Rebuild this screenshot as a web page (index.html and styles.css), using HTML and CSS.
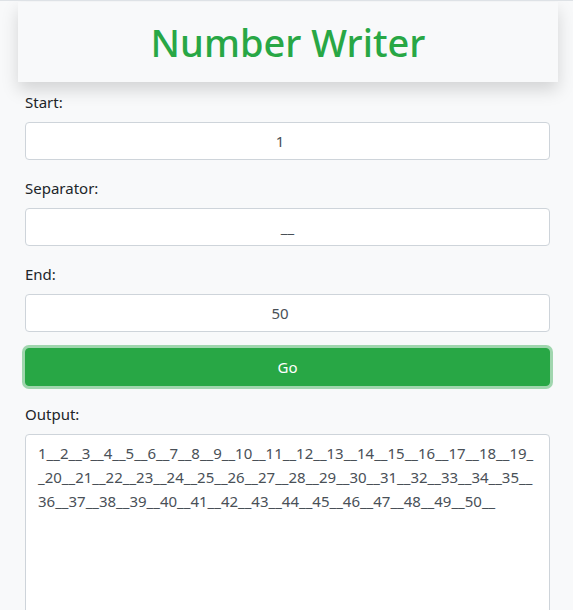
FILE: index.html
```html
<!DOCTYPE html>
<html lang="en">
<head>
<meta charset="utf-8">
<title>Number Writer</title>
<link rel="stylesheet" href="styles.css">
</head>
<body>
<div class="page">
  <header class="header">
    <h1 class="title">Number Writer</h1>
  </header>
  <form class="form">
    <div class="group">
      <label class="label" for="start">Start:</label>
      <input class="control" id="start" type="number" value="1">
    </div>
    <div class="group">
      <label class="label" for="sep">Separator:</label>
      <input class="control" id="sep" type="text" value="__">
    </div>
    <div class="group">
      <label class="label" for="end">End:</label>
      <input class="control" id="end" type="number" value="50">
    </div>
    <div class="group">
      <button class="btn" type="button">Go</button>
    </div>
    <div class="group">
      <label class="label">Output:</label>
      <div class="output"><span class="line">1__2__3__4__5__6__7__8__9__10__11__12__13__14__15__16__17__18__19_</span><span class="line">_20__21__22__23__24__25__26__27__28__29__30__31__32__33__34__35__</span><span class="line">36__37__38__39__40__41__42__43__44__45__46__47__48__49__50__</span></div>
    </div>
  </form>
</div>
</body>
</html>
```
FILE: styles.css
```css
* { box-sizing: border-box; }
html, body { margin: 0; padding: 0; }
body {
  background: #f8f9fa;
  border-top: 1px solid #dee2e6;
  font-family: "Noto Sans", "Open Sans", sans-serif;
  font-size: 15px;
  line-height: 24px;
  color: #212529;
  overflow: hidden;
}
.page {
  padding: 1px 15px 0 18px;
}
.header {
  background: #f8f9fa;
  box-shadow: 0 8px 16px rgba(0, 0, 0, 0.15);
  padding: 16px 0 16px;
  margin-bottom: 8px;
}
.title {
  margin: 0;
  text-align: center;
  color: #28a745;
  font-size: 38px;
  font-weight: 500;
  line-height: 48px;
}
.form {
  margin: 0 8px 0 7px;
}
.group { margin-bottom: 16px; }
.label {
  display: block;
  margin-bottom: 8px;
  font-size: 15px;
  line-height: 24px;
}
.control {
  display: block;
  width: 100%;
  height: 38px;
  padding: 6px 12px;
  font: inherit;
  font-size: 15px;
  line-height: 24px;
  color: #495057;
  text-align: center;
  background: #fff;
  border: 1px solid #ced4da;
  border-radius: 4px;
}
.btn {
  display: block;
  width: 100%;
  height: 38px;
  padding: 6px 12px;
  font: inherit;
  font-size: 15px;
  line-height: 24px;
  color: #fff;
  background: #28a745;
  border: 1px solid #28a745;
  border-radius: 4px;
  box-shadow: 0 0 0 3px rgba(72, 180, 97, 0.5);
}
.output {
  height: 300px;
  padding: 6px 12px;
  font-size: 15px;
  line-height: 24px;
  color: #495057;
  background: #fff;
  border: 1px solid #ced4da;
  border-radius: 4px;
  white-space: pre;
  overflow: hidden;
}
.line { display: block; }
```
